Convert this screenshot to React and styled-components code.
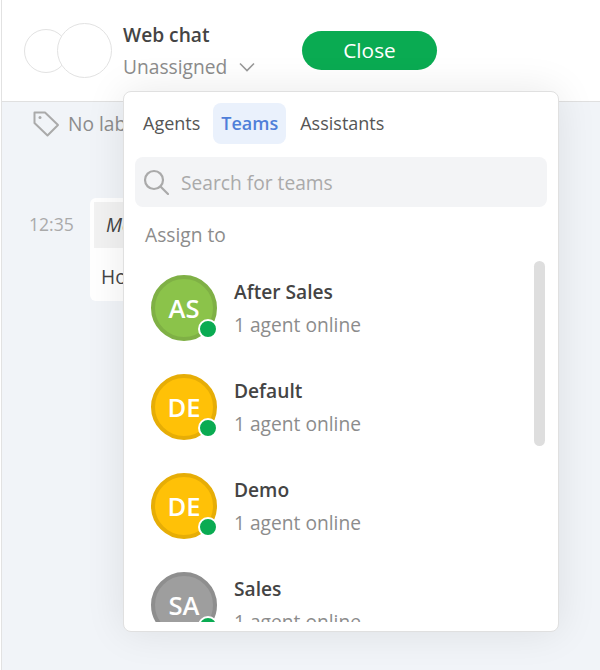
import React from "react"
import styled, { createGlobalStyle } from "styled-components"

const GlobalStyle = createGlobalStyle`
  html, body {
    margin: 0;
    height: 100%;
    background: #fff;
    font-family: "Open Sans", sans-serif;
    overflow: hidden;
  }
`

const Page = styled.div`
  position: relative;
  width: 598px;
  height: 670px;
  margin-left: 1px;
  border-left: 1px solid #e2e2e2;
  background: #f1f4f8;
  overflow: hidden;
`

const Header = styled.div`
  display: flex;
  align-items: center;
  height: 102px;
  box-sizing: border-box;
  padding: 0 0 0 22px;
  background: #fff;
  border-bottom: 1px solid #e0e0e0;
`

const Faces = styled.div`
  display: flex;
  align-items: center;
  width: 99px;
`

const Face = styled.div`
  width: ${props => props.size}px;
  height: ${props => props.size}px;
  box-sizing: border-box;
  flex: none;
  margin-left: ${props => props.offset || 0}px;
  border-radius: 50%;
  border: 1px solid #e2e2e2;
  background: #fff;
`

const ChatInfo = styled.div`
  display: flex;
  flex-direction: column;
  width: 179px;
`

const ChatTitle = styled.div`
  font-size: 19.2px;
  line-height: 25px;
  font-weight: 600;
  color: #444;
`

const Assignee = styled.div`
  display: flex;
  align-items: center;
  gap: 12px;
  margin-top: 7px;
  font-size: 19.2px;
  line-height: 25px;
  color: #8c8c8c;
`

const CloseButton = styled.button`
  width: 135px;
  height: 39px;
  border: 0;
  padding: 0 0 2px;
  border-radius: 20px;
  background: #0aab52;
  color: #fff;
  font-family: inherit;
  font-size: 20.8px;
`

const Labels = styled.div`
  display: flex;
  align-items: center;
  gap: 8px;
  padding: 8px 0 0 31px;
  font-size: 19.2px;
  line-height: 26px;
  color: #8c8c8c;
`

const MessageRow = styled.div`
  display: flex;
  align-items: flex-start;
  margin-top: 61px;
  padding-left: 27px;
`

const Time = styled.div`
  width: 61px;
  padding-top: 14px;
  font-size: 17.6px;
  line-height: 24px;
  color: #aaa;
`

const Bubble = styled.div`
  width: 220px;
  box-sizing: border-box;
  padding: 4px;
  background: #fff;
  border-radius: 6px;
`

const Quote = styled.div`
  height: 46px;
  padding-left: 12px;
  font-size: 19.2px;
  line-height: 46px;
  font-style: italic;
  color: #444;
  background: #f2f2f2;
`

const BubbleText = styled.div`
  padding: 16px 7px 7px;
  font-size: 19.2px;
  line-height: 26px;
  color: #444;
`

const Popup = styled.div`
  position: absolute;
  left: 121px;
  top: 91px;
  width: 436px;
  height: 541px;
  box-sizing: border-box;
  border: 1px solid #e0e0e0;
  border-radius: 8px;
  background: #fff;
  box-shadow: 0 0 40px rgba(0, 0, 0, 0.09);
  overflow: hidden;
`

const Tabs = styled.div`
  display: flex;
  padding: 11px 0 0 11px;
`

const Tab = styled.div`
  height: 41px;
  padding: 0 8px;
  margin-right: ${props => props.gap || 0}px;
  border-radius: 8px;
  font-size: 18px;
  line-height: 41px;
  color: ${props => props.active ? "#4f7fd9" : "#555"};
  background: ${props => props.active ? "#eaf1fc" : "transparent"};
  font-weight: ${props => props.active ? 600 : 400};
`

const Search = styled.div`
  display: flex;
  align-items: center;
  gap: 12px;
  height: 50px;
  margin: 13px 11px 0;
  padding-left: 8px;
  border-radius: 8px;
  background: #f3f4f6;
  font-size: 19.2px;
  color: #aaa;
`

const AssignLabel = styled.div`
  padding: 15px 0 0 21px;
  font-size: 19.2px;
  line-height: 26px;
  color: #8c8c8c;
`

const List = styled.div`
  height: 360px;
  margin-top: 14px;
  padding: 13px 0 0 27px;
  box-sizing: border-box;
  overflow: hidden;
`

const Row = styled.div`
  display: flex;
  align-items: center;
  gap: 17px;
  height: 66px;
  margin-bottom: 33px;
`

const Avatar = styled.div`
  position: relative;
  width: 66px;
  height: 66px;
  flex: none;
  box-sizing: border-box;
  display: flex;
  align-items: center;
  justify-content: center;
  border-radius: 50%;
  border: 4px solid ${props => props.edge};
  background: ${props => props.fill};
  color: #fff;
  font-size: 25.6px;
  font-weight: 600;
`

const OnlineDot = styled.span`
  position: absolute;
  right: -5px;
  bottom: -2px;
  width: 20px;
  height: 20px;
  box-sizing: border-box;
  border-radius: 50%;
  border: 2px solid #fff;
  background: #0aab52;
`

const RowText = styled.div`
  display: flex;
  flex-direction: column;
  gap: 8px;
`

const TeamName = styled.div`
  font-size: 19.2px;
  line-height: 25px;
  font-weight: 600;
  color: #444;
`

const TeamStatus = styled.div`
  font-size: 19.2px;
  line-height: 25px;
  color: #8c8c8c;
`

const ScrollThumb = styled.div`
  position: absolute;
  left: 410px;
  top: 169px;
  width: 11px;
  height: 185px;
  border-radius: 6px;
  background: #dedede;
`

const teams = [
  { name: "After Sales", initials: "AS", fill: "#8bc34a", edge: "#7fb045" },
  { name: "Default", initials: "DE", fill: "#ffc107", edge: "#e6ad06" },
  { name: "Demo", initials: "DE", fill: "#ffc107", edge: "#e6ad06" },
  { name: "Sales", initials: "SA", fill: "#9e9e9e", edge: "#8e8e8e" },
]

const App = () => {
  return <Page>
    <GlobalStyle />
    <Header>
      <Faces>
        <Face size={44} />
        <Face size={55} offset={-11} />
      </Faces>
      <ChatInfo>
        <ChatTitle>Web chat</ChatTitle>
        <Assignee>
          Unassigned
          <svg width="16" height="10" viewBox="0 0 16 10" fill="none" stroke="#999" strokeWidth="1.6">
            <path d="M1 1.500l7 7 7-7" />
          </svg>
        </Assignee>
      </ChatInfo>
      <CloseButton>Close</CloseButton>
    </Header>

    <Labels>
      <svg width="27" height="27" viewBox="0 0 27 27" fill="none" stroke="#aaa" strokeWidth="2" strokeLinejoin="round">
        <path d="M1.500 2.500h10.500L25 15 14.500 25.500 1.500 13z" />
        <circle cx="7" cy="7.500" r="1.500" fill="#aaa" stroke="none" />
      </svg>
      No labels
    </Labels>

    <MessageRow>
      <Time>12:35</Time>
      <Bubble>
        <Quote>Message</Quote>
        <BubbleText>Hola</BubbleText>
      </Bubble>
    </MessageRow>

    <Popup>
      <Tabs>
        <Tab gap={5}>Agents</Tab>
        <Tab active gap={6}>Teams</Tab>
        <Tab>Assistants</Tab>
      </Tabs>
      <Search>
        <svg width="26" height="26" viewBox="0 0 26 26" fill="none" stroke="#aaa" strokeWidth="2.2" strokeLinecap="round">
          <circle cx="11" cy="11" r="9" />
          <path d="M17.500 17.500L25 25" />
        </svg>
        Search for teams
      </Search>
      <AssignLabel>Assign to</AssignLabel>
      <List>
        {teams.map(team => (
          <Row key={team.name}>
            <Avatar fill={team.fill} edge={team.edge}>
              {team.initials}
              <OnlineDot />
            </Avatar>
            <RowText>
              <TeamName>{team.name}</TeamName>
              <TeamStatus>1 agent online</TeamStatus>
            </RowText>
          </Row>
        ))}
      </List>
      <ScrollThumb />
    </Popup>
  </Page>
}

export default App
